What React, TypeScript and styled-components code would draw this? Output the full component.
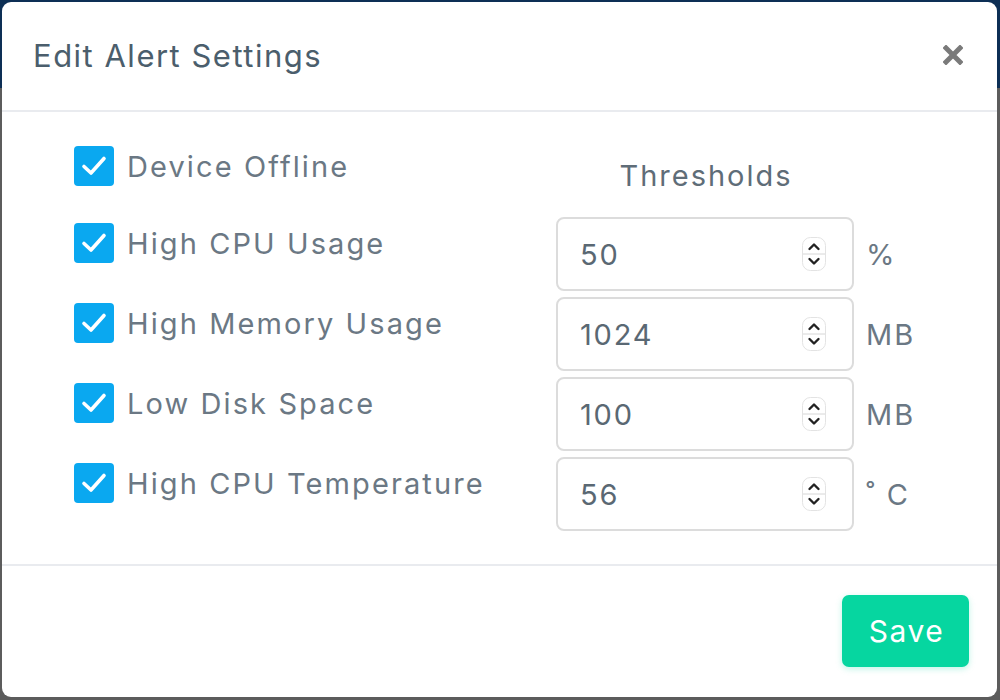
import React from "react";
import styled, { createGlobalStyle } from "styled-components";

const GlobalStyle = createGlobalStyle`
  html, body { margin: 0; padding: 0; }
  body {
    width: 1000px;
    height: 700px;
    overflow: hidden;
    font-family: Inter, "Noto Sans", "Liberation Sans", sans-serif;
  }
  * { box-sizing: border-box; }
`;

const Backdrop = styled.div`
  position: relative;
  width: 1000px;
  height: 700px;
  display: flex;
  flex-direction: column;
  background: #5c5c5c;
`;

const TopBand = styled.div`
  height: 88px;
  background: #0d2f55;
`;

const Modal = styled.div`
  position: absolute;
  left: 2px;
  top: 2px;
  width: 995px;
  height: 695px;
  background: #ffffff;
  border-radius: 9px;
  display: flex;
  flex-direction: column;
  overflow: hidden;
`;

const Header = styled.div`
  height: 110px;
  flex: none;
  display: flex;
  align-items: center;
  justify-content: space-between;
  padding: 0 34px 2px 31px;
  border-bottom: 2px solid #e9ebef;
`;

const Title = styled.h1`
  margin: 0;
  font-size: 31px;
  font-weight: 400;
  letter-spacing: 1.5px;
  color: #4b5e6c;
`;

const CloseButton = styled.button`
  border: none;
  background: none;
  padding: 0;
  width: 20px;
  height: 20px;
  display: flex;
  cursor: pointer;
`;

const Body = styled.div`
  flex: 1;
  display: flex;
  flex-direction: column;
  gap: 6px;
  padding: 28px 0 0 72px;
  border-bottom: 2px solid #e9ebef;
`;

const Row = styled.div<{ $head?: boolean }>`
  display: flex;
  height: ${(p) => (p.$head ? "71px" : "74px")};
  align-items: ${(p) => (p.$head ? "center" : "flex-start")};
`;

const LeftCell = styled.label`
  width: 482px;
  display: flex;
  align-items: center;
  gap: 13px;
  padding-top: 6px;
  align-self: flex-start;
  cursor: pointer;
`;

const Box = styled.span`
  width: 40px;
  height: 40px;
  border-radius: 4px;
  background: #0aa8f0;
  display: flex;
  align-items: center;
  justify-content: center;
  flex: none;
`;

const Label = styled.span`
  font-size: 29px;
  color: #6b7884;
  letter-spacing: 2.1px;
`;

const HeadCell = styled.div`
  width: 298px;
  text-align: center;
  font-size: 29px;
  color: #5f6d78;
  letter-spacing: 2px;
  padding-left: 2px;
`;

const InputBox = styled.div`
  width: 298px;
  height: 74px;
  border: 2px solid #dcdcdc;
  border-radius: 8px;
  display: flex;
  align-items: center;
  padding: 0 26px 0 22px;
`;

const Value = styled.input`
  flex: 1;
  min-width: 0;
  border: none;
  outline: none;
  background: transparent;
  font-family: inherit;
  font-size: 29px;
  color: #5a6873;
  letter-spacing: 1.8px;
  padding: 0;
`;

const Spinner = styled.span`
  width: 24px;
  height: 34px;
  display: flex;
  flex: none;
`;

const Unit = styled.span`
  margin-left: 12px;
  align-self: center;
  font-size: 29px;
  color: #6b7884;
  letter-spacing: 2px;
  white-space: pre;
`;

const Footer = styled.div`
  height: 131px;
  flex: none;
  display: flex;
  align-items: flex-start;
  justify-content: flex-end;
  padding: 29px 28px 0 0;
`;

const SaveButton = styled.button`
  width: 127px;
  height: 72px;
  border: none;
  border-radius: 7px;
  background: #06d6a0;
  color: #ffffff;
  font-family: inherit;
  font-size: 30px;
  letter-spacing: 1.5px;
  padding: 0 0 0 2px;
  box-shadow: 0 2px 6px rgba(6, 214, 160, 0.25);
  cursor: pointer;
`;

const Check = () => (
  <svg width="26" height="22" viewBox="0 0 26 22">
    <path d="M3 11.5 L10 18 L23 3.5" fill="none" stroke="#fff" strokeWidth="3.6" strokeLinecap="round" strokeLinejoin="round" />
  </svg>
);

const SpinIcon = () => (
  <svg width="24" height="34" viewBox="0 0 24 34">
    <rect x="0.5" y="0.5" width="23" height="33" rx="8" fill="#fff" stroke="#e3e3e3" />
    <line x1="1" y1="17" x2="23" y2="17" stroke="#d6d6d6" strokeWidth="1" />
    <path d="M7.5 12 L12 7.5 L16.5 12" fill="none" stroke="#222" strokeWidth="2.4" strokeLinecap="round" strokeLinejoin="round" />
    <path d="M7.5 22 L12 26.5 L16.5 22" fill="none" stroke="#222" strokeWidth="2.4" strokeLinecap="round" strokeLinejoin="round" />
  </svg>
);

const CloseIcon = () => (
  <svg width="20" height="20" viewBox="0 0 20 20">
    <path d="M3 3 L17 17 M17 3 L3 17" stroke="#7a7a7a" strokeWidth="5" strokeLinecap="square" />
  </svg>
);

const rows = [
  { label: "High CPU Usage", value: "50", unit: "%" },
  { label: "High Memory Usage", value: "1024", unit: "MB" },
  { label: "Low Disk Space", value: "100", unit: "MB" },
  { label: "High CPU Temperature", value: "56", unit: "˚ C" },
];

export default function App() {
  return (
    <>
      <GlobalStyle />
      <Backdrop>
        <TopBand />
        <Modal>
          <Header>
            <Title>Edit Alert Settings</Title>
            <CloseButton aria-label="Close">
              <CloseIcon />
            </CloseButton>
          </Header>
          <Body>
            <Row $head>
              <LeftCell>
                <Box>
                  <Check />
                </Box>
                <Label>Device Offline</Label>
              </LeftCell>
              <HeadCell>Thresholds</HeadCell>
            </Row>
            {rows.map((r) => (
              <Row key={r.label}>
                <LeftCell>
                  <Box>
                    <Check />
                  </Box>
                  <Label>{r.label}</Label>
                </LeftCell>
                <InputBox>
                  <Value defaultValue={r.value} />
                  <Spinner>
                    <SpinIcon />
                  </Spinner>
                </InputBox>
                <Unit>{r.unit}</Unit>
              </Row>
            ))}
          </Body>
          <Footer>
            <SaveButton>Save</SaveButton>
          </Footer>
        </Modal>
      </Backdrop>
    </>
  );
}
